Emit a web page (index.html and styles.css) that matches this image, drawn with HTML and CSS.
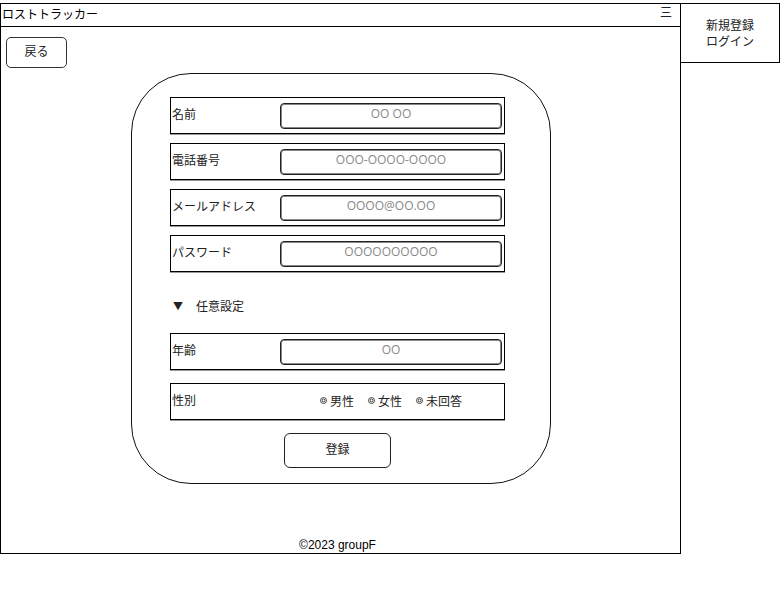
FILE: index.html
```html
<!DOCTYPE html>
<html lang="ja">
<head>
<meta charset="utf-8">
<title>ロストトラッカー</title>
<link rel="stylesheet" href="styles.css">
</head>
<body>
<div class="page">
  <div class="frame">
    <header class="topbar">
      <span class="title">ロストトラッカー</span>
      <span class="menu">三</span>
    </header>
    <div class="back"><span class="btn-text">戻る</span></div>
    <div class="card">
      <div class="row">
        <span class="label">名前</span>
        <span class="input">OO OO</span>
      </div>
      <div class="row">
        <span class="label">電話番号</span>
        <span class="input">OOO-OOOO-OOOO</span>
      </div>
      <div class="row">
        <span class="label">メールアドレス</span>
        <span class="input">OOOO@OO.OO</span>
      </div>
      <div class="row">
        <span class="label">パスワード</span>
        <span class="input">OOOOOOOOOO</span>
      </div>
      <div class="section"><span class="tri">▼</span><span>任意設定</span></div>
      <div class="row">
        <span class="label">年齢</span>
        <span class="input">OO</span>
      </div>
      <div class="row row-gap">
        <span class="label">性別</span>
        <div class="radios">
          <span class="opt"><svg class="dot" width="7" height="7" viewBox="0 0 7 7"><circle cx="3.5" cy="3.5" r="3" fill="none" stroke="#333" stroke-width="0.9"/><circle cx="3.5" cy="3.5" r="1.4" fill="none" stroke="#333" stroke-width="0.9"/></svg>男性</span>
          <span class="opt"><svg class="dot" width="7" height="7" viewBox="0 0 7 7"><circle cx="3.5" cy="3.5" r="3" fill="none" stroke="#333" stroke-width="0.9"/><circle cx="3.5" cy="3.5" r="1.4" fill="none" stroke="#333" stroke-width="0.9"/></svg>女性</span>
          <span class="opt"><svg class="dot" width="7" height="7" viewBox="0 0 7 7"><circle cx="3.5" cy="3.5" r="3" fill="none" stroke="#333" stroke-width="0.9"/><circle cx="3.5" cy="3.5" r="1.4" fill="none" stroke="#333" stroke-width="0.9"/></svg>未回答</span>
        </div>
      </div>
      <div class="submit"><span class="btn-text">登録</span></div>
    </div>
    <footer class="footer">©2023 groupF</footer>
  </div>
  <div class="side">
    <div class="side-line">新規登録</div>
    <div class="side-line">ログイン</div>
  </div>
</div>
</body>
</html>
```

FILE: styles.css
```css
* { box-sizing: border-box; }
html, body { margin: 0; padding: 0; background: #fff; }
body {
  font-family: "Noto Sans CJK JP", "Liberation Sans", sans-serif;
  font-size: 12px;
  line-height: 16px;
  color: #000;
}
.page {
  display: flex;
  align-items: flex-start;
  padding-top: 3px;
}
.frame {
  width: 681px;
  height: 551px;
  border: 1px solid #000;
  display: flex;
  flex-direction: column;
}
.topbar {
  height: 23px;
  border-bottom: 1px solid #000;
  display: flex;
  align-items: center;
  justify-content: space-between;
  padding: 0 8px 0 1px;
}
.title { font-size: 12px; line-height: 16px; margin-bottom: 2px; }
.menu { font-size: 12px; line-height: 14px; color: #222; margin-bottom: 6px; }
.back {
  margin: 10px 0 0 5px;
  width: 61px;
  height: 31px;
  border: 1px solid #333;
  border-radius: 5px;
  display: flex;
  align-items: center;
  justify-content: center;
  font-size: 12px;
  color: #222;
}
.btn-text { margin-bottom: 3px; }
.card {
  margin: 5px 0 0 130px;
  width: 420px;
  height: 411px;
  border: 1px solid #111;
  border-radius: 60px;
  padding: 23px 0 0 38px;
  display: flex;
  flex-direction: column;
  gap: 9px;
}
.row {
  width: 335px;
  height: 37px;
  border: 1px solid #000;
  box-shadow: 0 1px 0 #999;
  display: flex;
  align-items: center;
  padding-left: 1px;
}
.row-gap { margin-top: 4px; }
.label {
  width: 108px;
  font-size: 12px;
  color: #222;
  margin-bottom: 4px;
}
.input {
  width: 222px;
  height: 26px;
  border: 1px solid #222;
  border-radius: 4px;
  box-shadow: inset 0 0 0 1px #888;
  display: flex;
  align-items: center;
  justify-content: center;
  padding-bottom: 3px;
  font-family: "Open Sans", "Liberation Sans", sans-serif;
  font-size: 12px;
  color: #888;
}
.section {
  margin: 18px 0 9px 0;
  height: 16px;
  display: flex;
  align-items: center;
  padding-left: 3px;
  padding-bottom: 2px;
  font-size: 12px;
  color: #222;
}
.tri { font-size: 10px; width: 23px; }
.radios {
  display: flex;
  gap: 14px;
  margin-left: 40px;
  margin-bottom: 2px;
  font-size: 12px;
  color: #222;
}
.opt { display: flex; align-items: center; }
.dot { margin-right: 3px; }
.submit {
  margin: 4px 0 0 114px;
  width: 107px;
  height: 35px;
  border: 1px solid #222;
  border-radius: 6px;
  display: flex;
  align-items: center;
  justify-content: center;
  font-size: 12px;
  color: #222;
}
.footer {
  margin-top: auto;
  text-align: center;
  font-family: "Liberation Sans", Arial, sans-serif;
  font-size: 12px;
  line-height: 14px;
  padding-bottom: 1px;
  padding-right: 6px;
}
.side {
  margin-left: -1px;
  width: 100px;
  height: 60px;
  border: 1px solid #000;
  padding-top: 13px;
  text-align: center;
  font-size: 12px;
  color: #222;
}
.side-line { line-height: 16px; }
```
